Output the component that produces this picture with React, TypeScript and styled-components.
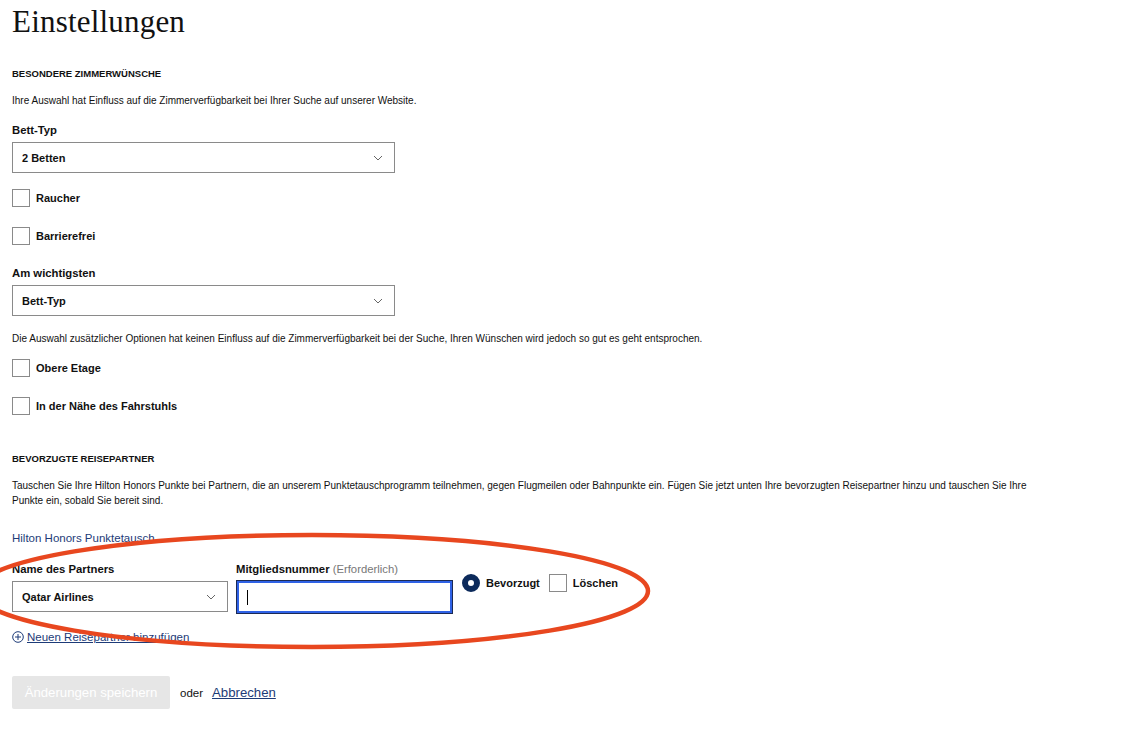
import React from "react";
import styled, { createGlobalStyle } from "styled-components";

const colors = {
  text: "#111",
  navy: "#1d3b78",
  radio: "#0c2a5b",
  border: "#8a8a8a",
  muted: "#777",
  focus: "#2f62e6",
  ellipse: "#e8471f",
};

const GlobalStyle = createGlobalStyle`
  body {
    margin: 0;
    background: #fff;
    font-family: "Liberation Sans", Arial, sans-serif;
    color: ${colors.text};
  }
`;

const Chevron = () => (
  <svg width="10" height="6" viewBox="0 0 10 6">
    <polyline points="1,1 5,5 9,1" fill="none" stroke="#666" strokeWidth="1" />
  </svg>
);

const PlusCircle = () => (
  <svg width="12" height="12" viewBox="0 0 12 12">
    <circle cx="6" cy="6" r="5.3" fill="none" stroke={colors.navy} strokeWidth="1" />
    <path d="M6 3v6M3 6h6" stroke={colors.navy} strokeWidth="1" />
  </svg>
);

type Option = { label: string; mt: number };

const roomOptions: Option[] = [
  { label: "Raucher", mt: 16 },
  { label: "Barrierefrei", mt: 20 },
];

const extraOptions: Option[] = [
  { label: "Obere Etage", mt: 13 },
  { label: "In der Nähe des Fahrstuhls", mt: 20 },
];

const App = () => {
  return (
    <Page>
      <GlobalStyle />
      <Title>Einstellungen</Title>

      <SectionHeading $mt={23}>Besondere Zimmerwünsche</SectionHeading>
      <Note $mt={13}>
        Ihre Auswahl hat Einfluss auf die Zimmerverfügbarkeit bei Ihrer Suche auf unserer Website.
      </Note>

      <FieldLabel $mt={14}>Bett-Typ</FieldLabel>
      <Select $width={383}>
        <span>2 Betten</span>
        <Chevron />
      </Select>
      {roomOptions.map((o) => (
        <CheckRow key={o.label} $mt={o.mt}>
          <Box />
          <span>{o.label}</span>
        </CheckRow>
      ))}

      <FieldLabel $mt={20}>Am wichtigsten</FieldLabel>
      <Select $width={383}>
        <span>Bett-Typ</span>
        <Chevron />
      </Select>
      <Note $mt={16}>
        Die Auswahl zusätzlicher Optionen hat keinen Einfluss auf die Zimmerverfügbarkeit bei der Suche,
        Ihren Wünschen wird jedoch so gut es geht entsprochen.
      </Note>
      {extraOptions.map((o) => (
        <CheckRow key={o.label} $mt={o.mt}>
          <Box />
          <span>{o.label}</span>
        </CheckRow>
      ))}

      <SectionHeading $mt={37}>Bevorzugte Reisepartner</SectionHeading>
      <Paragraph>
        Tauschen Sie Ihre Hilton Honors Punkte bei Partnern, die an unserem Punktetauschprogramm
        teilnehmen, gegen Flugmeilen oder Bahnpunkte ein. Fügen Sie jetzt unten Ihre bevorzugten
        Reisepartner hinzu und tauschen Sie Ihre Punkte ein, sobald Sie bereit sind.
      </Paragraph>
      <PlainLink>Hilton Honors Punktetausch</PlainLink>

      <PartnerRow>
        <Column $width={216}>
          <FieldLabel $mt={0}>Name des Partners</FieldLabel>
          <Select $width={216}>
            <span>Qatar Airlines</span>
            <Chevron />
          </Select>
        </Column>
        <Column $width={217}>
          <FieldLabel $mt={0}>
            Mitgliedsnummer <Hint>(Erforderlich)</Hint>
          </FieldLabel>
          <TextInput>
            <Caret />
          </TextInput>
        </Column>
        <Choices>
          <Choice>
            <Radio />
            <span>Bevorzugt</span>
          </Choice>
          <Choice>
            <Box />
            <span>Löschen</span>
          </Choice>
        </Choices>
      </PartnerRow>

      <AddLink>
        <PlusCircle />
        <span>Neuen Reisepartner hinzufügen</span>
      </AddLink>

      <Actions>
        <SaveButton>Änderungen speichern</SaveButton>
        <Or>oder</Or>
        <CancelLink>Abbrechen</CancelLink>
      </Actions>

      <Annotation width="700" height="160" viewBox="0 0 700 160">
        <ellipse
          cx="312"
          cy="71"
          rx="336"
          ry="56"
          fill="none"
          stroke={colors.ellipse}
          strokeWidth="4.5"
        />
      </Annotation>
    </Page>
  );
};

export default App;

const Page = styled.div`
  position: relative;
  padding: 0 12px 20px;
  min-height: 729px;
  box-sizing: border-box;
  overflow: hidden;
`;

const Title = styled.h1`
  margin: 0;
  font-family: "Liberation Serif", "Times New Roman", serif;
  font-weight: 400;
  font-size: 31px;
  line-height: 44px;
  letter-spacing: 0.2px;
`;

const SectionHeading = styled.h2<{ $mt: number }>`
  margin: ${({ $mt }) => $mt}px 0 0;
  font-size: 9.5px;
  line-height: 14px;
  font-weight: 700;
  text-transform: uppercase;
`;

const Note = styled.p<{ $mt: number }>`
  margin: ${({ $mt }) => $mt}px 0 0;
  font-size: 10px;
  line-height: 14px;
`;

const Paragraph = styled.p`
  margin: 12px 0 0;
  max-width: 1030px;
  font-size: 10px;
  line-height: 15px;
`;

const FieldLabel = styled.div<{ $mt: number }>`
  margin-top: ${({ $mt }) => $mt}px;
  font-size: 11.3px;
  line-height: 16px;
  font-weight: 700;
  margin-bottom: 4px;
`;

const Hint = styled.span`
  font-weight: 400;
  color: ${colors.muted};
`;

const Select = styled.div<{ $width: number }>`
  width: ${({ $width }) => $width}px;
  height: 31px;
  box-sizing: border-box;
  border: 1px solid ${colors.border};
  display: flex;
  align-items: center;
  justify-content: space-between;
  padding: 0 11px 0 9px;
  font-size: 11px;
  font-weight: 700;
`;

const CheckRow = styled.label<{ $mt: number }>`
  margin-top: ${({ $mt }) => $mt}px;
  display: flex;
  align-items: center;
  gap: 6px;
  font-size: 11px;
  font-weight: 700;
  height: 18px;
`;

const Box = styled.span`
  width: 18px;
  height: 18px;
  box-sizing: border-box;
  border: 1px solid ${colors.border};
  background: #fff;
  flex-shrink: 0;
`;

const Radio = styled.span`
  width: 18px;
  height: 18px;
  box-sizing: border-box;
  border-radius: 50%;
  border: 6px solid ${colors.radio};
  background: #fff;
  flex-shrink: 0;
`;

const PlainLink = styled.a`
  display: block;
  margin-top: 23px;
  font-size: 11.5px;
  line-height: 14px;
  color: ${colors.navy};
`;

const PartnerRow = styled.div`
  margin-top: 16px;
  display: flex;
  align-items: flex-start;
  gap: 8px;
`;

const Column = styled.div<{ $width: number }>`
  width: ${({ $width }) => $width}px;
  display: flex;
  flex-direction: column;
`;

const TextInput = styled.div`
  margin-top: -1px;
  height: 34px;
  box-sizing: border-box;
  border: 1px solid #1b2a55;
  box-shadow: inset 0 0 0 2px ${colors.focus};
  display: flex;
  align-items: center;
  padding-left: 10px;
`;

const Caret = styled.span`
  width: 1px;
  height: 15px;
  background: #000;
`;

const Choices = styled.div`
  margin-top: 13px;
  margin-left: 1px;
  display: flex;
  align-items: center;
  gap: 9px;
`;

const Choice = styled.label`
  display: flex;
  align-items: center;
  gap: 6px;
  font-size: 11px;
  font-weight: 700;
`;

const AddLink = styled.a`
  margin-top: 16px;
  display: flex;
  align-items: center;
  gap: 3px;
  font-size: 11.5px;
  line-height: 14px;
  color: ${colors.navy};
  span {
    text-decoration: underline;
  }
`;

const Actions = styled.div`
  margin-top: 32px;
  display: flex;
  align-items: center;
`;

const SaveButton = styled.button`
  width: 158px;
  height: 33px;
  border: none;
  border-radius: 2px;
  background: #e6e6e6;
  color: #fff;
  font-family: inherit;
  font-size: 13.2px;
  padding: 0;
`;

const Or = styled.span`
  margin-left: 10px;
  font-size: 11.5px;
`;

const CancelLink = styled.a`
  margin-left: 9px;
  font-size: 13.2px;
  color: ${colors.navy};
  text-decoration: underline;
`;

const Annotation = styled.svg`
  position: absolute;
  left: 0;
  top: 520px;
  overflow: visible;
  pointer-events: none;
`;
